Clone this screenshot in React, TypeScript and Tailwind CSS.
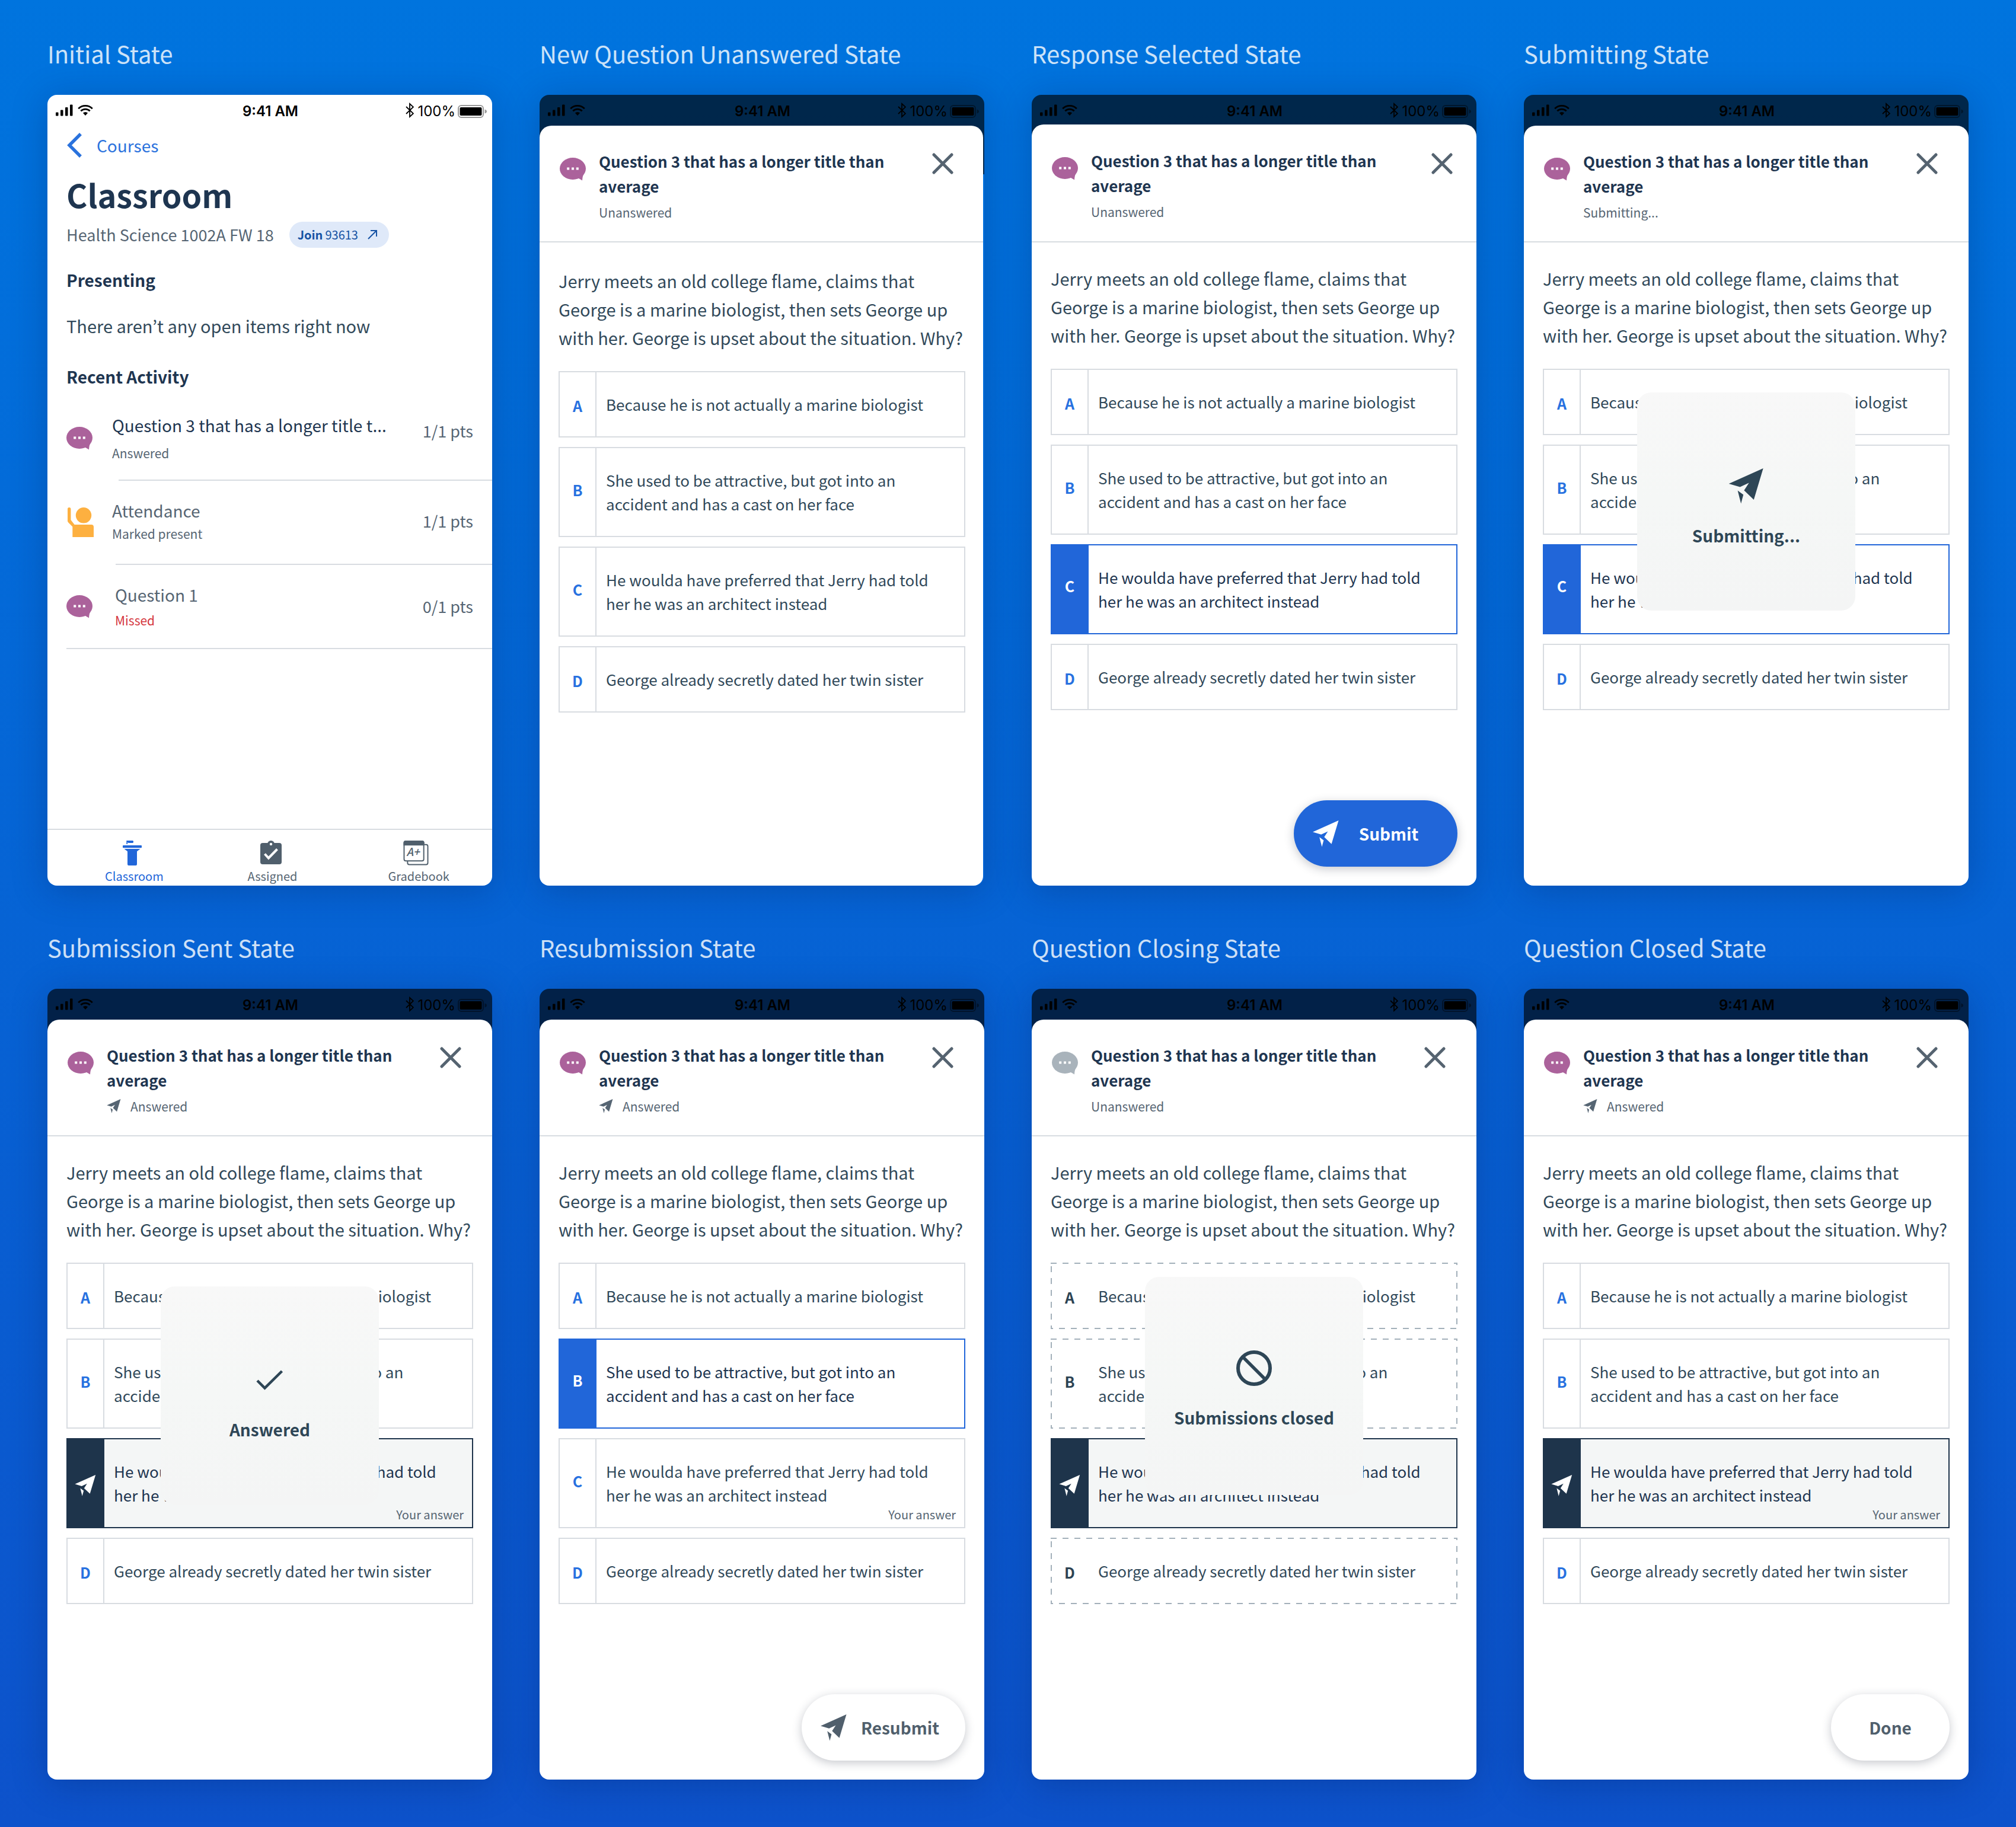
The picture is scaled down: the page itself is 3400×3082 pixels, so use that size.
import type { ReactNode } from "react";

type IconProps = { className?: string };

function PlaneIcon({ className }: IconProps) {
  return (
    <svg viewBox="0 0 44 45" className={className} fill="currentColor" aria-hidden="true">
      <path d="M43.5 0 0 19.5l14.2 4.2L25.5 18.4 19.3 28l12.3 11.8Z" />
      <path d="m11.2 28.2 7.2 5.2-3 11.2Z" />
    </svg>
  );
}

function ChatIcon({ className }: IconProps) {
  return (
    <svg viewBox="0 0 44 39" className={className} fill="currentColor" aria-hidden="true">
      <ellipse cx="22" cy="18.5" rx="22" ry="18.5" />
      <path d="M31 34.5c2 .6 4.500 2.500 7 4 .3-3.500.4-6.500 2-10Z" />
      <path fill="#fff" d="M12.200 16.600h4v4h-4zM20 16.600h4v4h-4zM27.800 16.600h4v4h-4z" />
    </svg>
  );
}

function PersonIcon({ className }: IconProps) {
  return (
    <svg viewBox="0 0 44 50" className={className} fill="currentColor" aria-hidden="true">
      <circle cx="27" cy="13.300" r="13.200" />
      <path d="M0 2.700a2.700 2.700 0 0 1 5.400 0V21l6.200 8H40a4 4 0 0 1 4 4v17H8.300V32.500L1.100 25.200A4 4 0 0 1 0 22.500Z" />
    </svg>
  );
}

function LecternIcon({ className }: IconProps) {
  return (
    <svg viewBox="0 0 32 42" className={className} fill="currentColor" aria-hidden="true">
      <path d="M6.300 0H17l1 1v2l-1 1H9.500L8 3v3H6.300Z" />
      <rect y="8" width="32" height="4.200" rx="1" />
      <path d="M2.500 14h27L24 18.200V40a2 2 0 0 1-2 2H10a2 2 0 0 1-2-2V18.200Z" />
    </svg>
  );
}

function ClipboardIcon({ className }: IconProps) {
  return (
    <svg viewBox="0 0 36 40" className={className} aria-hidden="true">
      <rect y="4" width="36" height="36" rx="4" fill="currentColor" />
      <circle cx="18" cy="6" r="6" fill="currentColor" />
      <circle cx="18" cy="6" r="2.200" fill="#fff" />
      <path d="m7.500 22.500 6.400 7L28.500 14.500" fill="none" stroke="#fff" strokeWidth="4" />
    </svg>
  );
}

function GradesIcon({ className }: IconProps) {
  return (
    <svg viewBox="0 0 43 43" className={className} fill="none" stroke="currentColor" strokeWidth="2" aria-hidden="true">
      <path d="M36 7h3a3 3 0 0 1 3 3v28.500a3 3 0 0 1-3 3H10a3 3 0 0 1-3-3V35" />
      <rect x="1" y="1" width="34" height="34" rx="3" fill="#fff" />
      <path d="M0 8.500V4a4 4 0 0 1 4-4h28a4 4 0 0 1 4 4v4.500Z" fill="currentColor" stroke="none" />
      <text x="5" y="27" fontSize="19" fontStyle="italic" fill="currentColor" stroke="none" className="font-['Noto_Sans_CJK_KR',sans-serif] font-medium">
        A+
      </text>
    </svg>
  );
}

function CloseIcon({ className }: IconProps) {
  return (
    <svg viewBox="0 0 36 36" className={className} stroke="currentColor" strokeWidth="5" strokeLinecap="round" aria-hidden="true">
      <path d="m3 3 30 30M33 3 3 33" />
    </svg>
  );
}

function CheckIcon({ className }: IconProps) {
  return (
    <svg viewBox="0 0 60 60" className={className} fill="none" stroke="currentColor" strokeWidth="4.500" aria-hidden="true">
      <path d="m9 31 12.500 12.500L50.500 15" />
    </svg>
  );
}

function ClosedIcon({ className }: IconProps) {
  return (
    <svg viewBox="0 0 60 60" className={className} fill="none" stroke="currentColor" strokeWidth="6" aria-hidden="true">
      <circle cx="30" cy="30" r="27" />
      <path d="m11 11 38 38" strokeWidth="5.500" />
    </svg>
  );
}

function StatusBar({ className }: { className: string }) {
  return (
    <div className={"flex items-start justify-between pl-3.5 pr-2 pt-3 font-['Inter',sans-serif] text-2xl leading-8 text-black " + className}>
      <div className="flex w-[136px] items-center gap-2 pt-1">
        <svg viewBox="0 0 29 20" className="h-5 w-[29px]" fill="currentColor" aria-hidden="true">
          <rect y="13.500" width="4.500" height="6" rx="1" />
          <rect x="8" y="9.500" width="4.500" height="10" rx="1" />
          <rect x="16" y="5" width="4.500" height="14.500" rx="1" />
          <rect x="24" y="0.500" width="4.500" height="19" rx="1" />
        </svg>
        <svg viewBox="0 0 26 18" className="h-[18px] w-[26px]" fill="none" stroke="currentColor" strokeWidth="2.800" aria-hidden="true">
          <path d="M1.200 6.200a17 17 0 0 1 23.600 0M5.300 10.300a11 11 0 0 1 15.400 0" />
          <path d="M8.900 13.600a6 6 0 0 1 8.200 0L13 18Z" fill="currentColor" stroke="none" />
        </svg>
      </div>
      <div className="font-semibold">9:41 AM</div>
      <div className="flex w-[140px] items-center justify-end gap-1">
        <div className="flex items-center gap-1.5">
          <svg viewBox="0 0 14 26" className="-mt-1 h-[26px] w-3.5" fill="none" stroke="currentColor" strokeWidth="1.800" aria-hidden="true">
            <path d="m1 7 12 11.500L7 24V2l6 5.500L1 19" />
          </svg>
          <span>100%</span>
        </div>
        <svg viewBox="0 0 50 22" className="h-[22px] w-[50px]" aria-hidden="true">
          <rect x="1" y="1" width="42" height="20" rx="5" fill="none" stroke="currentColor" strokeWidth="2" opacity="0.4" />
          <rect x="3.500" y="4" width="37" height="14" rx="2" fill="currentColor" />
          <path d="M45.500 7.500c2.500.8 3.500 2 3.500 3.500s-1 2.700-3.500 3.500Z" fill="currentColor" opacity="0.4" />
        </svg>
      </div>
    </div>
  );
}

function Screen({ label, children }: { label: string; children: ReactNode }) {
  return (
    <section>
      <h2 className="mb-10 text-[40px] leading-[60px] text-white/80">{label}</h2>
      <div className="relative flex min-h-[1334px] flex-col rounded-2xl shadow-[0_8px_60px_rgba(0,20,70,0.25)]">{children}</div>
    </section>
  );
}

type ActivityProps = {
  icon: ReactNode;
  title: string;
  status: string;
  points: string;
  textClass: string;
  titleClass: string;
  statusClass: string;
  pointsClass: string;
  ruleClass: string;
};

function Activity(p: ActivityProps) {
  return (
    <li>
      <div className="flex h-[140px] items-start pl-8 pr-8">
        <div className="flex w-12 items-center self-stretch">{p.icon}</div>
        <div className={"flex-1 " + p.textClass}>
          <div className={"text-[28px] leading-10 " + p.titleClass}>{p.title}</div>
          <div className={"text-[21px] leading-[30px] " + p.statusClass}>{p.status}</div>
        </div>
        <div className={"text-[27px] leading-10 text-[#566573] " + p.pointsClass}>{p.points}</div>
      </div>
      <hr className={"border-t-2 border-[#d8dce1] " + p.ruleClass} />
    </li>
  );
}

function ClassroomScreen() {
  return (
    <Screen label="Initial State">
      <div className="flex flex-1 flex-col overflow-hidden rounded-2xl bg-white">
        <StatusBar className="h-[52px]" />
        <nav className="flex h-[66px] items-center pl-8">
          <a href="#courses" className="flex items-center gap-6 text-[28px] leading-10 text-[#2a72dd]">
            <svg viewBox="0 0 27 42" className="h-[42px] w-[27px]" fill="none" stroke="currentColor" strokeWidth="5.500" aria-hidden="true">
              <path d="M24 2 5 21l19 19" />
            </svg>
            Courses
          </a>
        </nav>
        <h1 className="mt-4 pl-8 text-[54px] font-bold leading-[68px] text-[#1e3550]">Classroom</h1>
        <div className="mt-3 flex items-center gap-[26px] pl-8">
          <p className="text-[27px] leading-10 text-[#566573]">Health Science 1002A FW 18</p>
          <button className="flex h-11 items-center rounded-full bg-[#dfe9f9] pl-3.5 pr-5 text-xl leading-7 text-[#1653a4]">
            <span className="font-bold">Join</span>
            <span className="ml-1">93613</span>
            <svg viewBox="0 0 16 16" className="ml-4 size-4" fill="none" stroke="currentColor" strokeWidth="2" aria-hidden="true">
              <path d="M1 15 15 1M5 1h10v10" />
            </svg>
          </button>
        </div>
        <h3 className="mt-[34px] pl-8 text-[28px] font-bold leading-10 text-[#1e3550]">Presenting</h3>
        <p className="mt-[37px] pl-8 text-[29px] leading-10 text-[#31495a]">There aren’t any open items right now</p>
        <h3 className="mt-[46px] pl-8 text-[28px] font-bold leading-10 text-[#1e3550]">Recent Activity</h3>
        <ul className="mt-3.5">
          <Activity
            icon={<ChatIcon className="h-[39px] w-11 text-[#ab629b]" />}
            title="Question 3 that has a longer title t..."
            status="Answered"
            points="1/1 pts"
            textClass="pl-[29px] pt-7"
            titleClass="text-[#1e3550]"
            statusClass="mt-3 text-[#566573]"
            pointsClass="mt-[38px]"
            ruleClass="ml-[120px]"
          />
          <Activity
            icon={<PersonIcon className="ml-0.5 h-[50px] w-11 text-[#fdb040]" />}
            title="Attendance"
            status="Marked present"
            points="1/1 pts"
            textClass="pl-[29px] pt-[30px]"
            titleClass="text-[#566573]"
            statusClass="mt-1 text-[#566573]"
            pointsClass="mt-12"
            ruleClass="ml-[115px]"
          />
          <Activity
            icon={<ChatIcon className="h-[39px] w-11 text-[#ab629b]" />}
            title="Question 1"
            status="Missed"
            points="0/1 pts"
            textClass="pl-[34px] pt-[30px]"
            titleClass="text-[#566573]"
            statusClass="mt-2 text-[#d5363d]"
            pointsClass="mt-[50px]"
            ruleClass="ml-8"
          />
        </ul>
        <nav className="mt-auto grid h-24 grid-cols-[235fr_232fr_258fr] border-t-2 border-[#d8dce1] pl-[26px] pt-[18px] text-xl leading-9 text-[#566573]">
          <a href="#classroom" className="flex flex-col items-center text-[#2166d9]">
            <LecternIcon className="h-[42px] w-8" />
            <span className="pl-1.5">Classroom</span>
          </a>
          <a href="#assigned" className="flex flex-col items-center">
            <ClipboardIcon className="mb-0.5 h-10 w-9 text-[#505f6c]" />
            <span className="pl-1.5">Assigned</span>
          </a>
          <a href="#gradebook" className="flex flex-col items-center">
            <GradesIcon className="h-[42px] w-[43px] text-[#505f6c]" />
            <span className="pl-2.5">Gradebook</span>
          </a>
        </nav>
      </div>
    </Screen>
  );
}

type Mark = "none" | "selected" | "sent" | "disabled";

const boxStyles: Record<Mark, string> = {
  none: "border-[#d8dce1] text-[#31495a]",
  selected: "border-[#2166d9] text-[#1e3550]",
  sent: "border-[#1e344b] bg-[#f4f6f6] text-[#1e3550]",
  disabled: "border-transparent text-[#31495a]",
};

const letterStyles: Record<Mark, string> = {
  none: "border-[#d8dce1] text-[#2771e0]",
  selected: "border-[#2166d9] bg-[#2166d9] text-white",
  sent: "border-[#1e344b] bg-[#1e344b] text-white",
  disabled: "border-transparent text-[#2c4353]",
};

const answers = [
  { letter: "A", text: "Because he is not actually a marine biologist", nudge: "pt-1" },
  { letter: "B", text: "She used to be attractive, but got into an accident and has a cast on her face", nudge: "pb-2" },
  { letter: "C", text: "He woulda have preferred that Jerry had told her he was an architect instead", nudge: "pb-2" },
  { letter: "D", text: "George already secretly dated her twin sister", nudge: "pt-1" },
];

function Option({ letter, text, nudge, mark, yours }: { letter: string; text: string; nudge: string; mark: Mark; yours: boolean }) {
  const pressed = mark === "selected" || mark === "sent";
  const place = mark === "sent" ? "pt-2" : mark === "selected" ? "pb-3" : nudge;
  return (
    <button aria-pressed={pressed} className={"relative flex w-full items-stretch border-2 text-left " + boxStyles[mark]}>
      {mark === "disabled" && (
        <svg className="absolute -inset-0.5 h-[calc(100%+4px)] w-[calc(100%+4px)]" aria-hidden="true">
          <rect width="100%" height="100%" fill="none" stroke="#a3b0ba" strokeWidth="4" strokeDasharray="10 10" />
        </svg>
      )}
      <span className={"flex w-[62px] shrink-0 items-center justify-center border-r-2 text-[25px] font-bold leading-10 " + letterStyles[mark] + " " + place}>
        {mark === "sent" ? <PlaneIcon className="h-9 w-9" /> : letter}
      </span>
      <span className="flex-1 py-[34px] pl-4 pr-10 text-[26px] leading-10">{text}</span>
      {yours && <span className="absolute bottom-[7px] right-3.5 text-xl leading-7 text-[#566573]">Your answer</span>}
    </button>
  );
}

type QuestionProps = {
  label: string;
  status: string;
  sent?: boolean;
  marks?: Partial<Record<string, Mark>>;
  base?: Mark;
  yours?: boolean;
  iconClass?: string;
  barClass?: string;
  sheetClass?: string;
  headerClass?: string;
  closeClass?: string;
  bodyClass?: string;
  children?: ReactNode;
};

function QuestionScreen({
  label,
  status,
  sent = false,
  marks = {},
  base = "none",
  yours = false,
  iconClass = "text-[#ab629b]",
  barClass = "h-[52px]",
  sheetClass = "",
  headerClass = "h-[197px] pt-[39px]",
  closeClass = "top-[46px] right-[52px]",
  bodyClass = "px-8 pt-9",
  children,
}: QuestionProps) {
  return (
    <Screen label={label}>
      <div className="absolute inset-x-0 top-0 h-[134px] rounded-t-2xl bg-black/66" />
      <StatusBar className={"relative " + barClass} />
      <div className={"relative flex flex-1 flex-col rounded-b-2xl rounded-t-[20px] bg-white " + sheetClass}>
        <header className={"relative flex border-b-2 border-[#d8dce1] pl-[34px] " + headerClass}>
          <ChatIcon className={"mt-[15px] h-[39px] w-11 shrink-0 " + iconClass} />
          <div className="ml-[22px] w-[520px]">
            <h3 className="text-[26px] font-bold leading-[42px] text-[#1e3550]">Question 3 that has a longer title than average</h3>
            <p className="mt-2 flex items-center gap-4 text-[21px] leading-[30px] text-[#566573]">
              {sent && <PlaneIcon className="size-6" />}
              {status}
            </p>
          </div>
          <button aria-label="Close" className={"absolute text-[#556370] " + closeClass}>
            <CloseIcon className="size-9" />
          </button>
        </header>
        <div className={bodyClass}>
          <p className="text-[29px] leading-[48px] text-[#31495a]">
            Jerry meets an old college flame, claims that George is a marine biologist, then sets George up with her. George is upset about the situation. Why?
          </p>
          <div className="mt-[33px] flex flex-col gap-4">
            {answers.map((a) => (
              <Option key={a.letter} {...a} mark={marks[a.letter] ?? base} yours={yours && a.letter === "C"} />
            ))}
          </div>
        </div>
      </div>
      {children}
    </Screen>
  );
}

function Toast({ icon, text, className }: { icon: ReactNode; text: string; className: string }) {
  return (
    <div role="status" className={"absolute left-1/2 flex size-[368px] -translate-x-1/2 flex-col items-center rounded-3xl bg-linear-to-b from-[#f8f8f8] via-[#f5f7f6] to-[#f4f5f5] text-[#2e4656] " + className}>
      {icon}
      <div className="mt-[33px] text-[28px] font-bold leading-10">{text}</div>
    </div>
  );
}

const floating = "absolute bottom-8 right-8 flex h-28 items-center rounded-full text-[28px] font-bold leading-10 shadow-[0_4px_16px_rgba(30,40,60,0.25)] ";

export default function App() {
  return (
    <main className="grid grid-cols-4 gap-x-20 gap-y-[74px] bg-linear-to-b from-[#0074de] to-[#0d52cb] px-20 pb-20 pt-[60px] font-['Noto_Sans_CJK_KR','Noto_Sans',sans-serif]">
      <ClassroomScreen />
      <QuestionScreen label="New Question Unanswered State" status="Unanswered" bodyClass="pl-8 pr-[30px] pt-10" sheetClass="mr-0.5" closeClass="top-[46px] right-[50px]" />
      <QuestionScreen
        label="Response Selected State"
        status="Unanswered"
        marks={{ C: "selected" }}
        barClass="h-[50px]"
        headerClass="h-[199px] pt-10"
        closeClass="top-12 right-10"
      >
        <button className={floating + "w-[276px] bg-[#2166d9] pl-8 pr-8 text-white"}>
          <PlaneIcon className="h-[45px] w-11" />
          <span className="flex-1 text-center">Submit</span>
        </button>
      </QuestionScreen>
      <QuestionScreen label="Submitting State" status="Submitting..." marks={{ C: "selected" }}>
        <Toast className="top-[502px] pt-32" icon={<PlaneIcon className="size-[60px]" />} text="Submitting..." />
      </QuestionScreen>
      <QuestionScreen label="Submission Sent State" status="Answered" sent marks={{ C: "sent" }} yours>
        <Toast className="top-[502px] pt-32" icon={<CheckIcon className="size-[60px]" />} text="Answered" />
      </QuestionScreen>
      <QuestionScreen label="Resubmission State" status="Answered" sent marks={{ B: "selected" }} yours>
        <button className={floating + "w-[276px] bg-white pl-8 pr-5 text-[#505f6c]"}>
          <PlaneIcon className="h-[45px] w-11" />
          <span className="flex-1 text-center">Resubmit</span>
        </button>
      </QuestionScreen>
      <QuestionScreen label="Question Closing State" status="Unanswered" base="disabled" marks={{ C: "sent" }} iconClass="text-[#a9b3bb]">
        <Toast className="top-[486px] pt-[124px]" icon={<ClosedIcon className="size-[60px]" />} text="Submissions closed" />
      </QuestionScreen>
      <QuestionScreen label="Question Closed State" status="Answered" sent marks={{ C: "sent" }} yours>
        <button className={floating + "w-[200px] justify-center bg-white text-[#505f6c]"}>Done</button>
      </QuestionScreen>
    </main>
  );
}
